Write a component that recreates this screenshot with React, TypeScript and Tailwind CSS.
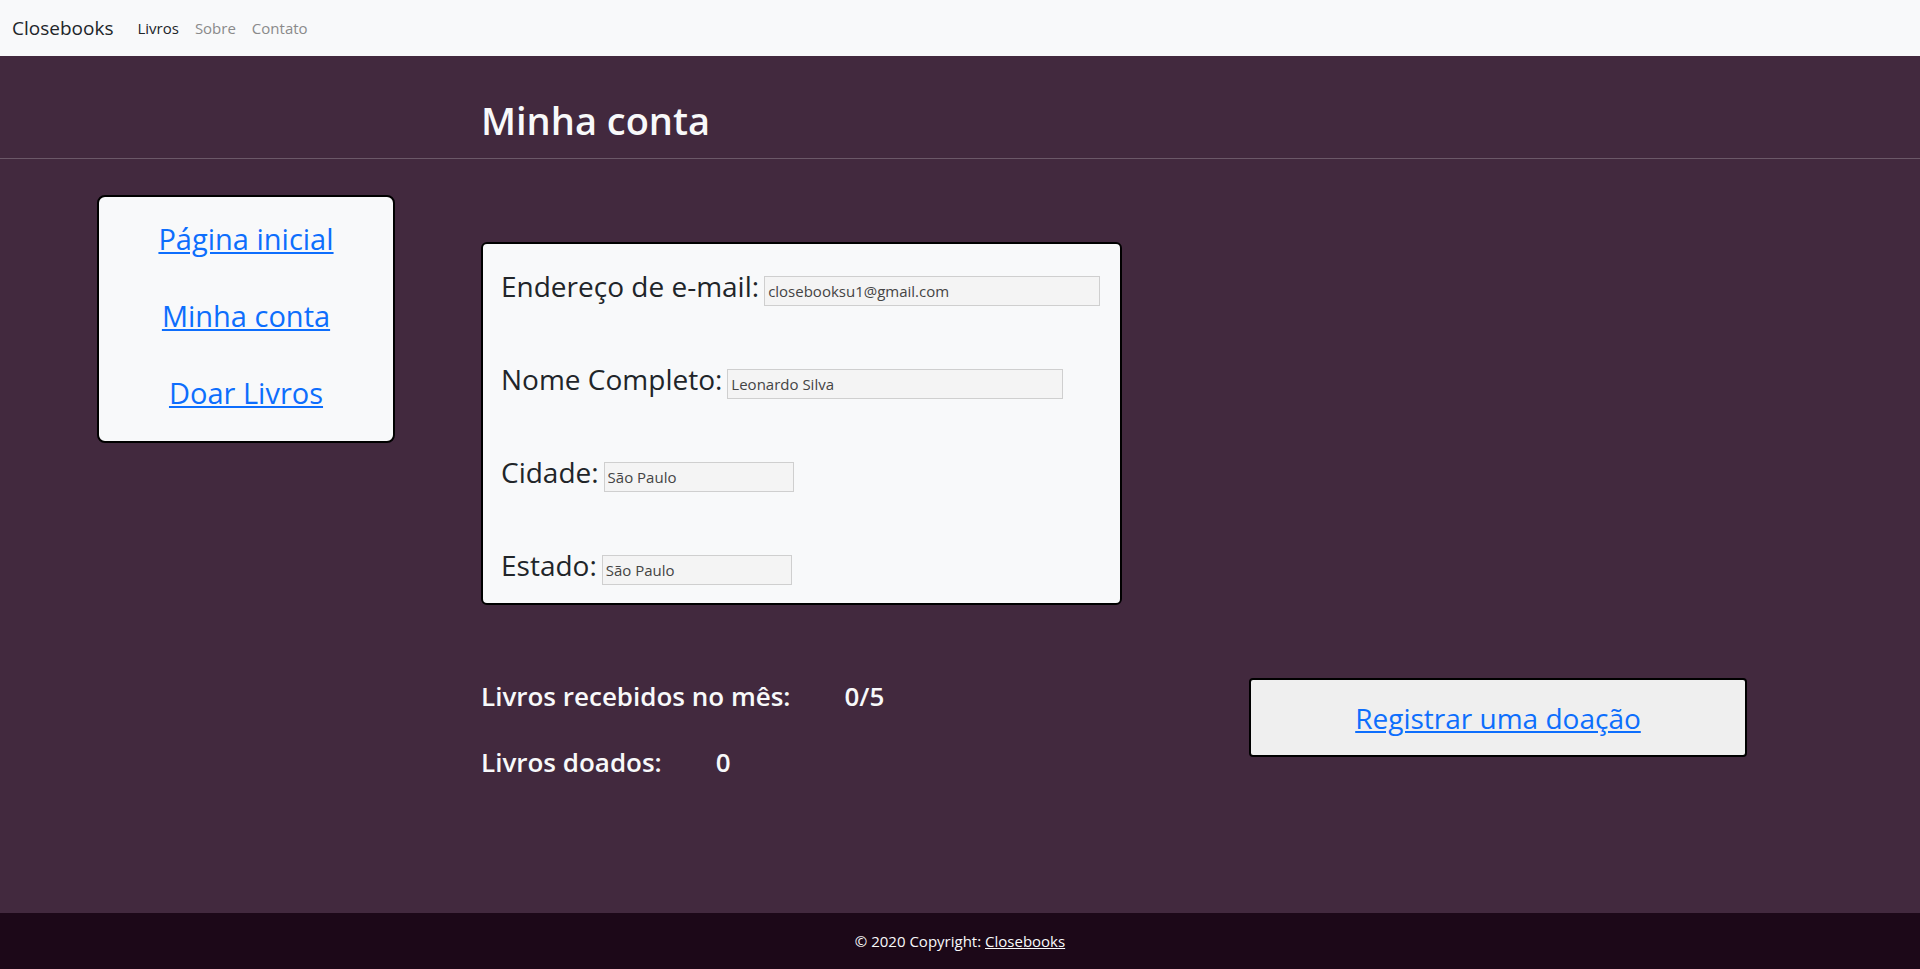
import React from "react";

const font = { fontFamily: '"Open Sans", "Liberation Sans", sans-serif' };

function Field({ label, value, width }: { label: string; value: string; width: string }) {
  return (
    <div className="flex h-[38px] items-baseline whitespace-nowrap">
      <span className="text-[28px] leading-[38px] text-[#212529]">{label}</span>
      <input
        readOnly
        value={value}
        className={`ml-[5px] h-[30px] ${width} shrink-0 border border-[#cfcfcf] bg-[#f4f4f4] px-[3px] text-[15px] text-[#444] outline-none`}
        style={font}
      />
    </div>
  );
}

export default function App() {
  return (
    <div className="flex min-h-[969px] flex-col bg-[#42293e]" style={font}>
      <nav className="flex h-[56px] items-center bg-[#f8f9fa] px-[12px]">
        <span className="mr-[16px] text-[19px] text-[#212529]">Closebooks</span>
        <a className="px-[8px] text-[15px] text-[#212529]">Livros</a>
        <a className="px-[8px] text-[15px] text-[#8a8a8a]">Sobre</a>
        <a className="px-[8px] text-[15px] text-[#8a8a8a]">Contato</a>
      </nav>

      <main className="flex-1">
        <div className="pt-[40px]">
          <h1 className="ml-[481px] text-[38px] font-semibold leading-[48px] text-[#f8f9fa]">Minha conta</h1>
          <div className="mt-[14px] h-px bg-[#6b5868]" />
        </div>

        <div className="flex pt-[36px]">
          <div className="ml-[97px] flex h-[248px] w-[298px] shrink-0 flex-col items-center gap-[39px] rounded-[8px] border-2 border-black bg-[#f8f9fa] pt-[23px]">
            <a href="#" className="text-[29px] leading-[38px] text-[#0d6efd] underline">Página inicial</a>
            <a href="#" className="text-[29px] leading-[38px] text-[#0d6efd] underline">Minha conta</a>
            <a href="#" className="text-[29px] leading-[38px] text-[#0d6efd] underline">Doar Livros</a>
          </div>

          <div className="ml-[86px] flex flex-col">
            <div className="mt-[47px] flex h-[363px] w-[641px] flex-col gap-[55px] rounded-[6px] border-2 border-black bg-[#f8f9fa] pl-[18px] pt-[23px]">
              <Field label="Endereço de e-mail:" value="closebooksu1@gmail.com" width="w-[336px]" />
              <Field label="Nome Completo:" value="Leonardo Silva" width="w-[336px]" />
              <Field label="Cidade:" value="São Paulo" width="w-[190px]" />
              <Field label="Estado:" value="São Paulo" width="w-[190px]" />
            </div>

            <div className="mt-[73px] flex items-start">
              <div className="flex w-[768px] shrink-0 flex-col gap-[34px] pt-[2px] text-[26px] font-semibold leading-[32px] text-[#f8f9fa]">
                <div className="flex">
                  <span>Livros recebidos no mês:</span>
                  <span className="ml-[54px]">0/5</span>
                </div>
                <div className="flex">
                  <span>Livros doados:</span>
                  <span className="ml-[54px]">0</span>
                </div>
              </div>
              <div className="flex h-[79px] w-[498px] shrink-0 items-center justify-center rounded-[4px] border-2 border-black bg-[#efefef]">
                <a href="#" className="text-[28px] text-[#0d6efd] underline">Registrar uma doação</a>
              </div>
            </div>
          </div>
        </div>
      </main>

      <footer className="flex h-[56px] items-center justify-center bg-[#1c0818] text-[15px] text-[#f8f9fa]">
        <span>
          © 2020 Copyright: <a href="#" className="underline">Closebooks</a>
        </span>
      </footer>
    </div>
  );
}
